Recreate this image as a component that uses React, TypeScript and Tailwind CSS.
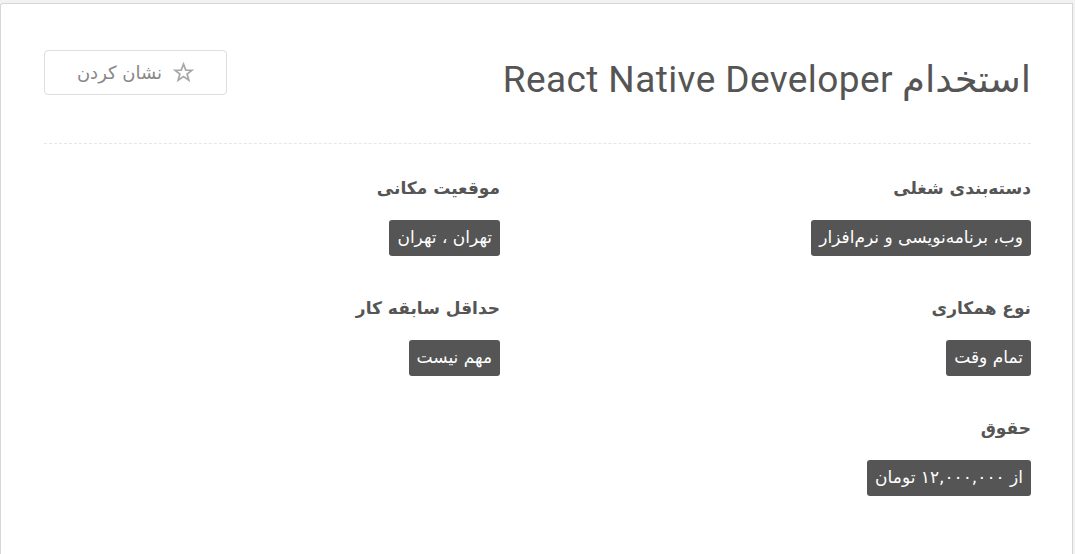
import React from 'react';

const fields = [
  { title: 'دسته‌بندی شغلی', value: 'وب، برنامه‌نویسی و نرم‌افزار' },
  { title: 'موقعیت مکانی', value: 'تهران ، تهران' },
  { title: 'نوع همکاری', value: 'تمام وقت' },
  { title: 'حداقل سابقه کار', value: 'مهم نیست' },
  { title: 'حقوق', value: 'از ۱۲,۰۰۰,۰۰۰ تومان' },
];

function StarIcon() {
  return (
    <svg width="21" height="21" viewBox="0 0 24 24" fill="none" stroke="#a8a8a8" strokeWidth="2" strokeLinejoin="miter">
      <polygon points="12,2.5 14.6,9.2 21.7,9.4 16.1,13.8 18.1,20.7 12,16.7 5.9,20.7 7.9,13.8 2.3,9.4 9.4,9.2" />
    </svg>
  );
}

export default function App() {
  return (
    <div className="min-h-[554px] bg-[#f2f2f2] pt-[3px]" style={{ fontFamily: '"DejaVu Sans", sans-serif' }}>
      <div className="min-h-[551px] bg-white border-t border-l border-r border-[#d6d6d6] rounded-tl-[3px] mr-[2px]">
        <div dir="rtl" className="pt-[46px] pl-[43px] pr-[41px]">
          {/* header */}
          <div className="flex justify-between items-start">
            <h1
              className="text-[37px] leading-[40px] tracking-[0.4px] text-[#555] mt-[10px]"
              style={{ fontFamily: 'Roboto, "DejaVu Sans", sans-serif' }}
            >
              استخدام React Native Developer
            </h1>
            <button className="flex items-center gap-[11px] h-[45px] w-[183px] justify-center border border-[#dedede] rounded-[4px] text-[#888] text-[18px]">
              <StarIcon />
              <span>نشان کردن</span>
            </button>
          </div>

          <div className="mt-[43px] border-t border-dashed border-[#e6e6e6]" />

          {/* details */}
          <div className="grid grid-cols-[456px_456px] gap-x-[75px] gap-y-[40px] pt-[32px]">
            {fields.map((f) => (
              <div key={f.title} className="flex flex-col items-start">
                <div className="text-[17px] leading-[24px] font-bold text-[#555]">{f.title}</div>
                <div className="mt-[20px] h-[36px] flex items-center bg-[#555] text-white text-[17px] px-[8px] rounded-[3px]">
                  {f.value}
                </div>
              </div>
            ))}
          </div>
        </div>
      </div>
    </div>
  );
}
